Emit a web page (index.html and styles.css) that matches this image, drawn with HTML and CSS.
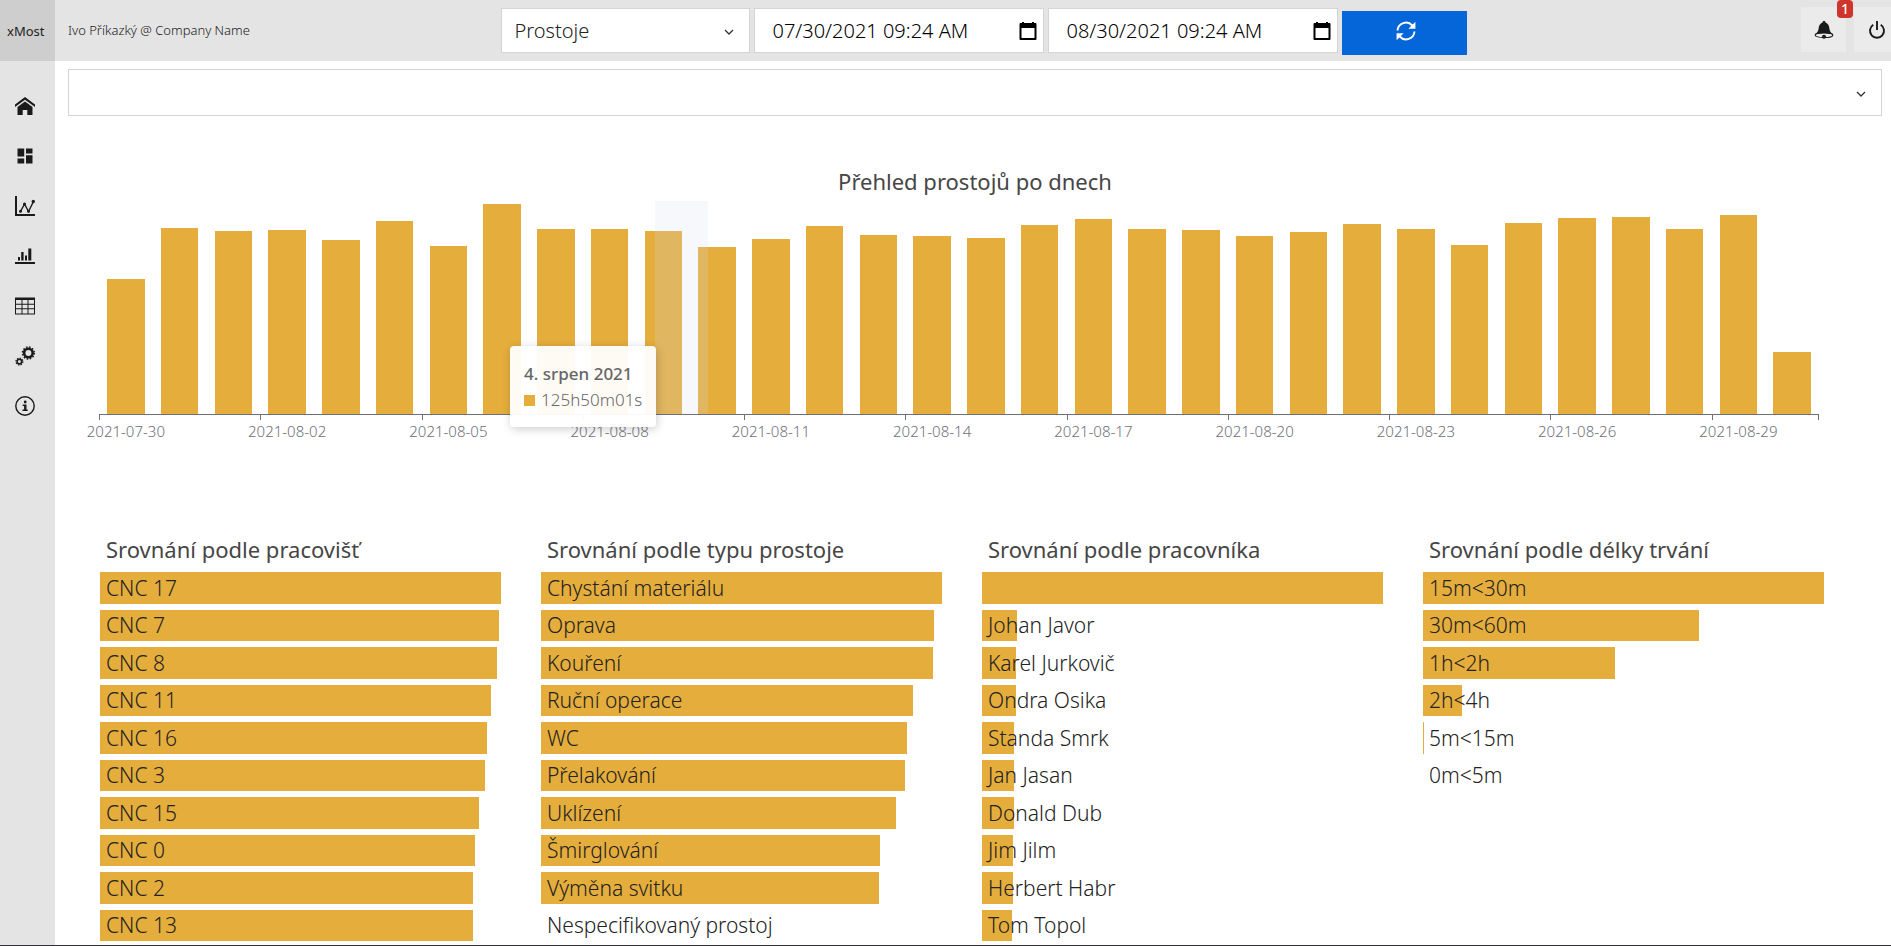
FILE: index.html
```html
<!DOCTYPE html>
<html lang="cs">
<head>
<meta charset="utf-8">
<meta name="viewport" content="width=device-width, initial-scale=1">
<title>xMost – Prostoje</title>
<link rel="stylesheet" href="styles.css">
</head>
<body>
<div class="app">
  <aside class="sidebar">
    <a class="logo" href="#">xMost</a>
    <nav class="nav" aria-label="Hlavní menu">
      <a href="#" aria-label="Domů"><svg viewBox="0 0 20 20"><path d="M10 1 0 8.400v2.600l10-7.300 10 7.300V8.400z"/><path d="M10 5.400 2.500 11v8h5.200v-5h4.600v5h5.200v-8z"/></svg></a>
      <a href="#" aria-label="Přehled"><svg viewBox="0 0 20 20"><path d="M2.500 2.500h6.700v8H2.500zM11 2.500h6.500v5H11zM2.500 12.400h6.700v5H2.500zM11 9.300h6.500v8.100H11z"/></svg></a>
      <a href="#" aria-label="Trendy"><svg viewBox="0 0 20 20"><path d="M0 0h2v18h18v2H0z"/><path d="M5.500 15.500 9.500 8l4 7.500 5-10" fill="none" stroke="currentColor" stroke-width="1.400"/><circle cx="5.500" cy="15.200" r="1.500"/><circle cx="9.500" cy="8" r="1.500"/><circle cx="13.500" cy="15.200" r="1.500"/><circle cx="18.300" cy="5.500" r="1.700"/></svg></a>
      <a href="#" aria-label="Statistiky"><svg viewBox="0 0 20 20"><path d="M0 16h20v2H0zM3 11h2v3.600H3zM6.200 6h2.400v8.600H6.200zM10 9.500h2v5.100h-2zM13.300 2.600h3v12h-3z"/></svg></a>
      <a href="#" aria-label="Tabulka"><svg viewBox="0 0 20 20"><path fill-rule="evenodd" d="M0 1.500h20v17H0zM1 4v3.700h5.500V4zm6.500 0v3.700h5V4zm6 0v3.700H19V4zM1 8.700v3.600h5.500V8.700zm6.500 0v3.600h5V8.700zm6 0v3.600H19V8.700zM1 13.300v4.200h5.500v-4.200zm6.500 0v4.200h5v-4.200zm6 0v4.200H19v-4.200z"/></svg></a>
      <a href="#" aria-label="Nastavení"><svg viewBox="0 0 20 20" fill="none" stroke="currentColor"><circle cx="13.400" cy="7" r="4.300" stroke-width="2.600"/><circle cx="13.400" cy="7" r="6" stroke-width="1.400" stroke-dasharray="1.570 1.570"/><circle cx="4.400" cy="15.600" r="2.300" stroke-width="1.600"/><circle cx="4.400" cy="15.600" r="3.500" stroke-width="1.200" stroke-dasharray="1.370 1.370"/></svg></a>
      <a href="#" aria-label="Informace"><svg viewBox="0 0 20 20"><circle cx="10" cy="10" r="9.200" fill="none" stroke="currentColor" stroke-width="1.400"/><circle cx="10.200" cy="6" r="1.400"/><path d="M7.700 8.500h3.800v5h1.200V15H7.500v-1.500h1.600V10H7.700z"/></svg></a>
    </nav>
  </aside>

  <div class="content">
    <header class="topbar">
      <span class="user">Ivo Příkazký @ Company Name</span>
      <form class="controls">
        <span class="select-box report">
          <select aria-label="Sestava"><option>Prostoje</option></select>
          <svg class="chevron" viewBox="0 0 10 6"><path d="M1 1l4 4 4-4"/></svg>
        </span>
        <span class="date">
          <input type="text" aria-label="Od" value="07/30/2021 09:24 AM">
          <svg viewBox="0 0 18 20"><path fill-rule="evenodd" d="M3 1h2v1h8V1h2v1h1.500q1 0 1 1v15q0 1-1 1h-15q-1 0-1-1V3q0-1 1-1H3zM2.500 7v10h13V7z"/></svg>
        </span>
        <span class="date">
          <input type="text" aria-label="Do" value="08/30/2021 09:24 AM">
          <svg viewBox="0 0 18 20"><path fill-rule="evenodd" d="M3 1h2v1h8V1h2v1h1.500q1 0 1 1v15q0 1-1 1h-15q-1 0-1-1V3q0-1 1-1H3zM2.500 7v10h13V7z"/></svg>
        </span>
        <button class="refresh" type="button" aria-label="Obnovit"><svg viewBox="0 0 20 20"><path d="M1.500 9.500a8.500 8.500 0 0 1 14.800-5M18.500 10.500a8.500 8.500 0 0 1-14.800 5" fill="none" stroke="currentColor" stroke-width="1.900"/><path d="M19.400.8v7h-7zM.6 19.200v-7h7z"/></svg></button>
      </form>
      <div class="actions">
        <button class="action" type="button" aria-label="Upozornění"><svg viewBox="0 0 20 20"><path d="M10 1c1 0 1.500.6 1.500 1.500 2.500.9 3.600 3 3.800 5.500.3 3.200 1.200 4.700 4.200 6.500H.5C3.500 12.700 4.400 11.200 4.700 8c.2-2.500 1.300-4.600 3.800-5.500C8.500 1.600 9 1 10 1z"/><ellipse cx="10" cy="15.200" rx="8.800" ry="2.300" fill="#ebebeb" stroke="currentColor" stroke-width="1.100"/><circle cx="10" cy="16.700" r="2"/></svg><span class="badge">1</span></button>
        <button class="action" type="button" aria-label="Odhlásit"><svg viewBox="0 0 20 20"><path d="M6.300 4.800a7 7 0 1 0 7.400 0M10 1v9" fill="none" stroke="currentColor" stroke-width="1.900"/></svg></button>
      </div>
    </header>

    <main>
      <span class="select-box filter">
        <select aria-label="Filtr"><option></option></select>
        <svg class="chevron" viewBox="0 0 10 6"><path d="M1 1l4 4 4-4"/></svg>
      </span>

      <section class="daily">
        <h2 class="daily-title">Přehled prostojů po dnech</h2>
        <div class="chart">
          <div class="plot" id="plot"></div>
          <div class="axis" id="axis"></div>
          <div class="highlight"></div>
          <div class="tooltip">
            <strong>4. srpen 2021</strong>
            <span class="tooltip-value"><i class="marker"></i>125h50m01s</span>
          </div>
        </div>
      </section>

      <div class="columns" id="columns"></div>
    </main>
  </div>
</div>
<script src="charts.js"></script>
</body>
</html>
```
FILE: styles.css
```css
* { box-sizing: border-box; }

body {
  margin: 0;
  background: #fff;
  color: #222;
  font-family: "Noto Sans", "Open Sans", sans-serif;
  font-weight: 300;
}

.app {
  display: flex;
  height: 100vh;
  overflow: hidden;
  border-bottom: 1px solid #333238;
}

.sidebar { width: 55px; flex: none; background: #e4e4e4; }

.logo {
  display: flex;
  align-items: center;
  padding-left: 7px;
  height: 61px;
  background: #cecece;
  color: #222;
  font-size: 13px;
  font-weight: 400;
  text-decoration: none;
}

.nav { display: flex; flex-direction: column; padding-top: 20px; }
.nav a {
  display: flex;
  align-items: center;
  height: 50px;
  padding-left: 15px;
  color: #1a1a1a;
}
.nav svg { width: 20px; height: 20px; fill: currentColor; }
.nav svg[fill="none"] { fill: none; }

.content { flex: 1; min-width: 0; }

.topbar {
  display: flex;
  align-items: flex-start;
  height: 61px;
  padding-left: 13px;
  background: #e4e4e4;
}
.user { flex: 1; font-size: 13px; line-height: 60px; white-space: nowrap; }

.controls { display: flex; gap: 4px; padding-top: 8px; }

.select-box { position: relative; display: block; }
.select-box select {
  appearance: none;
  display: block;
  width: 100%;
  height: 100%;
  padding: 0 40px 0 13px;
  border: 1px solid #d4d4d4;
  border-radius: 0;
  background: #fff;
  color: #222;
  font: inherit;
}
.chevron {
  position: absolute;
  top: 50%;
  right: 16px;
  width: 10px;
  height: 6px;
  margin-top: -2px;
  fill: none;
  stroke: #333;
  stroke-width: 1.300;
  pointer-events: none;
}

.report { width: 249px; height: 45px; font-size: 20px; }

.date {
  display: flex;
  align-items: center;
  width: 290px;
  height: 45px;
  padding: 0 6px 0 18px;
  border: 1px solid #d4d4d4;
  background: #fff;
}
.date input {
  flex: 1;
  min-width: 0;
  padding: 0;
  border: 0;
  background: transparent;
  color: #000;
  font: inherit;
  font-size: 20px;
}
.date svg { width: 18px; height: 20px; }

.refresh {
  display: flex;
  align-items: center;
  justify-content: center;
  width: 125px;
  height: 44px;
  margin-top: 3px;
  padding: 0 0 4px 3px;
  border: 0;
  background: #0466d8;
  color: #fff;
}
.refresh svg { width: 20px; height: 20px; fill: currentColor; }

.actions { flex: 1; display: flex; justify-content: flex-end; gap: 8px; padding-top: 7px; margin-right: -8px; }
.action {
  position: relative;
  display: flex;
  align-items: center;
  justify-content: center;
  width: 45px;
  height: 45px;
  padding: 0;
  border: 0;
  background: #ebebeb;
  color: #1a1a1a;
}
.action svg { width: 20px; height: 20px; fill: currentColor; }
.badge {
  position: absolute;
  top: -7px;
  right: -7px;
  width: 16px;
  height: 18px;
  border-radius: 4px;
  background: #d0342c;
  color: #fff;
  font: 500 14px/18px "Noto Sans", sans-serif;
  text-align: center;
}

.filter { height: 47px; margin: 8px 9px 0 13px; font-size: 20px; }

h2 { margin: 0; color: #464646; font-size: 22px; font-weight: 400; line-height: 30px; }

.daily { padding-top: 50px; }
.daily-title { margin: 0 9px 5px 13px; text-align: center; }

.chart { position: relative; margin: 0 72px 0 44px; }
.plot { display: flex; align-items: flex-end; height: 213px; }
.day { flex: 1; height: 100%; display: flex; align-items: flex-end; justify-content: center; }
.day-bar { width: 70%; background: #e5ad3c; }

.axis {
  display: grid;
  grid-template-columns: repeat(32, 1fr);
  height: 28px;
  border-top: 1px solid #6e7079;
  color: #6e7079;
  font-size: 15px;
  line-height: 20px;
}
.date-label {
  position: relative;
  display: flex;
  justify-content: center;
  min-width: 0;
  padding-top: 6px;
  white-space: nowrap;
}
.date-label::before, .axis::after {
  content: "";
  position: absolute;
  top: 0;
  left: 0;
  width: 1px;
  height: 5px;
  background: #6e7079;
}
.axis::after { top: 214px; left: auto; right: 0; }

.highlight {
  position: absolute;
  top: 0;
  left: 32.300%;
  width: 3.125%;
  height: 213px;
  background: rgba(210, 219, 238, 0.2);
}

.tooltip {
  position: absolute;
  top: 145px;
  left: 23.900%;
  display: flex;
  flex-direction: column;
  height: 81px;
  padding: 15px 14px 0;
  border-radius: 4px;
  background: rgba(255, 255, 255, 0.95);
  box-shadow: 1px 2px 10px rgba(0, 0, 0, 0.2);
  color: #666;
  font-size: 17px;
  line-height: 26px;
  white-space: nowrap;
}
.tooltip strong { font-weight: 500; }
.tooltip-value { display: flex; align-items: center; gap: 6px; }
.marker { width: 11px; height: 11px; background: #e5ad3c; }

.columns {
  display: grid;
  grid-template-columns: repeat(4, minmax(0, 1fr));
  gap: 40px;
  margin: 92px 67px 0 45px;
}
.column h2 { padding-left: 6px; margin-bottom: 8px; white-space: nowrap; }
.rows {
  display: grid;
  grid-template-rows: repeat(10, 1fr);
  gap: 6px;
  height: 369px;
  margin: 0;
  padding: 0;
  list-style: none;
}
.row { display: grid; align-items: center; min-height: 0; }
.row-bar { grid-area: 1 / 1; height: 100%; background: #e5ad3c; }
.row-label {
  grid-area: 1 / 1;
  z-index: 1;
  padding-left: 6px;
  font-size: 21px;
  line-height: 30px;
  white-space: nowrap;
}
```
FILE: charts.js
```js
// Daily downtime, in plot units (213 = full height).
const PLOT_MAX = 213;
const daily = [135, 186, 183, 184, 174, 193, 168, 210, 185, 185, 183, 167, 175, 188, 179, 178,
  176, 189, 195, 185, 184, 178, 182, 190, 185, 169, 191, 196, 197, 185, 199, 62];

const plot = document.getElementById("plot");
const axis = document.getElementById("axis");
const start = Date.UTC(2021, 6, 30);

daily.forEach((value, i) => {
  const day = document.createElement("div");
  day.className = "day";
  const bar = document.createElement("div");
  bar.className = "day-bar";
  bar.style.height = (value / PLOT_MAX) * 100 + "%";
  day.append(bar);
  plot.append(day);

  if (i % 3 === 0) {
    const label = document.createElement("span");
    label.className = "date-label";
    label.style.gridColumn = i + 1;
    label.textContent = new Date(start + i * 86400000).toISOString().slice(0, 10);
    axis.append(label);
  }
});

// Ranked comparisons: [label, percent of the largest value].
const groups = [
  ["Srovnání podle pracovišť", [["CNC 17", 100], ["CNC 7", 99.5], ["CNC 8", 98.9], ["CNC 11", 97.5],
    ["CNC 16", 96.4], ["CNC 3", 96], ["CNC 15", 94.5], ["CNC 0", 93.5], ["CNC 2", 93], ["CNC 13", 92.9]]],
  ["Srovnání podle typu prostoje", [["Chystání materiálu", 100], ["Oprava", 98], ["Kouření", 97.7],
    ["Ruční operace", 92.8], ["WC", 91.3], ["Přelakování", 90.8], ["Uklízení", 88.5],
    ["Šmirglování", 84.5], ["Výměna svitku", 84.3], ["Nespecifikovaný prostoj", 0]]],
  ["Srovnání podle pracovníka", [["", 100], ["Johan Javor", 8.7], ["Karel Jurkovič", 8.6],
    ["Ondra Osika", 8.4], ["Standa Smrk", 8], ["Jan Jasan", 8], ["Donald Dub", 7.9],
    ["Jim Jilm", 7.7], ["Herbert Habr", 7.7], ["Tom Topol", 7.5]]],
  ["Srovnání podle délky trvání", [["15m<30m", 100], ["30m<60m", 68.8], ["1h<2h", 47.9],
    ["2h<4h", 9.7], ["5m<15m", 0.02], ["0m<5m", 0]]]
];

const columns = document.getElementById("columns");
for (const [title, rows] of groups) {
  const column = document.createElement("section");
  column.className = "column";
  const heading = document.createElement("h2");
  heading.textContent = title;
  const list = document.createElement("ul");
  list.className = "rows";
  for (const [name, percent] of rows) {
    const row = document.createElement("li");
    row.className = "row";
    const bar = document.createElement("div");
    bar.className = "row-bar";
    bar.style.width = percent + "%";
    const label = document.createElement("span");
    label.className = "row-label";
    label.textContent = name;
    row.append(bar, label);
    list.append(row);
  }
  column.append(heading, list);
  columns.append(column);
}
```
